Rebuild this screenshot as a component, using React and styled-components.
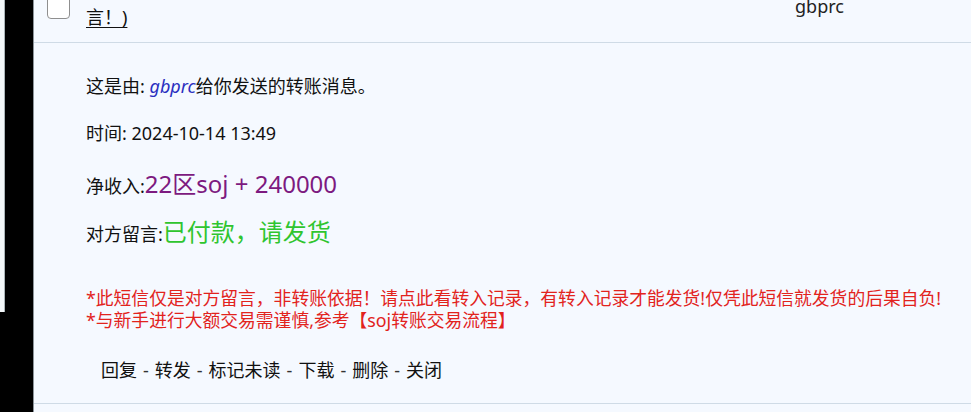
// Imports
import React from "react";
import styled, { createGlobalStyle } from "styled-components";

// Global
const GlobalStyle = createGlobalStyle`
	html, body{
		margin: 0;
		padding: 0;
		background: #000;
	}
	body{
		font-family: "Noto Sans", "Noto Sans CJK SC", sans-serif;
		color: #111;
	}
`;

// Data
const actions = ['回复', '转发', '标记未读', '下载', '删除', '关闭'];

// Component
const App = () => {

	// Return
	return(
		<>
			<GlobalStyle/>
			<Viewport>
				<Sidebar>
					<Strip/>
				</Sidebar>
				<Main>
					<MailRow>
						<Check/>
						<Subject href="#">
							转账通知：22区soj + 240000（此短信仅是对方留<br/>言！)
						</Subject>
						<Sender>gbprc</Sender>
					</MailRow>
					<Body>
						<Line>这是由: <Who>gbprc</Who>给你发送的转账消息。</Line>
						<Line $gap="23px">时间: 2024-10-14 13:49</Line>
						<Line $big>净收入:<Big $color="#7d1a80">22区soj + 240000</Big></Line>
						<Line $big>对方留言:<Big $color="#2fc52f">已付款，请发货</Big></Line>
						<Warning>
							*此短信仅是对方留言，非转账依据！请点此看转入记录，有转入记录才能发货!仅凭此短信就发货的后果自负!<br/>
							*与新手进行大额交易需谨慎,参考【soj转账交易流程】
						</Warning>
						<Actions>
							{
								actions.map((a, i) => (
									<React.Fragment key={ a }>
										{ i > 0 && <Sep>-</Sep> }
										<Action>{ a }</Action>
									</React.Fragment>
								))
							}
						</Actions>
					</Body>
				</Main>
			</Viewport>
		</>
	);

};

// Styled
const Viewport = styled.div`
	display: flex;
	width: 971px;
	height: 412px;
	overflow: hidden;
	background: #000;
`;

const Sidebar = styled.aside`
	width: 33px;
	flex-shrink: 0;
	background: #000;
`;

const Strip = styled.div`
	width: 4px;
	height: 312px;
	background: #f3f7f9;
	border-right: 1px solid #aab4b8;
`;

const Main = styled.main`
	flex: 1;
	background: #f5f9ff;
	border-left: 1px solid #8c949a;
	display: flex;
	flex-direction: column;
`;

// Mail list row (scrolled so only its second line shows)
const MailRow = styled.div`
	display: grid;
	grid-template-columns: 23px 693px auto;
	column-gap: 16px;
	align-items: center;
	margin-top: -33px;
	padding: 5px 0 10px 13px;
	border-bottom: 1px solid #cfdbe6;
	font-size: 18px;
	line-height: 30px;
`;

const Check = styled.span`
	width: 21px;
	height: 21px;
	margin-top: 10px;
	border: 1px solid #8f8f8f;
	border-radius: 4px;
	background: #fff;
`;

const Subject = styled.a`
	color: #111;
	text-decoration: underline;
	text-underline-offset: 3px;
	margin-right: 4px;
`;

const Sender = styled.span`
	color: #222;
	line-height: 24px;
	margin-top: 8px;
`;

const Body = styled.section`
	padding: 30px 0 20px 52px;
	border-bottom: 1px solid #cfdbe6;
`;

const Line = styled.p`
	margin: 0 0 ${ p => p.$gap || (p.$big ? '16px' : '21px') };
	font-size: 18px;
	line-height: ${ p => p.$big ? '30px' : '26px' };
`;

const Who = styled.i`
	color: #2a2fc0;
`;

const Big = styled.span`
	font-size: 24px;
	color: ${ p => p.$color };
`;

const Warning = styled.p`
	margin: 38px 0 26px;
	font-size: 17.8px;
	line-height: 22px;
	color: #e2231d;
	white-space: nowrap;
`;

const Actions = styled.nav`
	display: flex;
	align-items: center;
	gap: 6px;
	padding-left: 15px;
	font-size: 18px;
	line-height: 26px;
	color: #111;
`;

const Action = styled.span`
	cursor: pointer;
`;

const Sep = styled.span`
	color: #333;
`;

// Export
export default App;
